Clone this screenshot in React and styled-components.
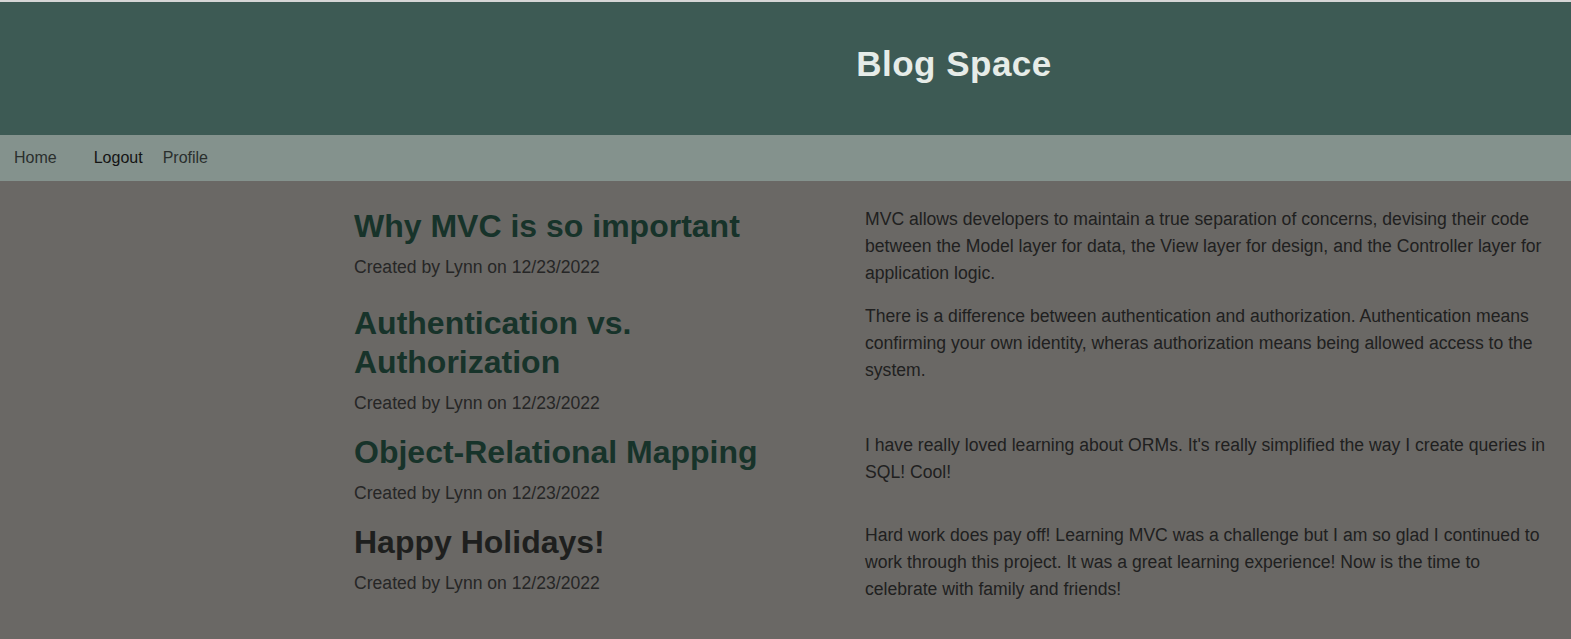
import React from "react";
import styled, { createGlobalStyle } from "styled-components";

const Global = createGlobalStyle`
  html, body {
    margin: 0;
    padding: 0;
    background: #6a6865;
    font-family: "Liberation Sans", Arial, sans-serif;
  }
  body {
    border-top: 2px solid #d6d6d6;
  }
`;

const Page = styled.div`
  min-height: 637px;
  background: #6a6865;
`;

const Header = styled.header`
  height: 133px;
  box-sizing: border-box;
  background: #3d5a54;
  display: flex;
  align-items: center;
  justify-content: center;
  padding-left: 337px;
  padding-bottom: 10px;
`;

const Title = styled.h1`
  margin: 0;
  font-size: 35px;
  font-weight: 700;
  color: #e6ece8;
  letter-spacing: 0.5px;
`;

const Nav = styled.nav`
  height: 46px;
  background: #84928d;
  display: flex;
  align-items: center;
  padding-left: 14px;
`;

const NavLink = styled.a`
  font-size: 16px;
  color: ${(p) => (p.$active ? "#141414" : "#2a2f2d")};
  text-decoration: none;
  margin-right: ${(p) => p.$gap}px;
  cursor: pointer;
`;

const Main = styled.main`
  padding: 26px 20px 20px 354px;
  display: flex;
  flex-direction: column;
  gap: 17px;
`;

const Post = styled.article`
  display: grid;
  grid-template-columns: 480px 1fr;
  column-gap: 31px;
  align-items: start;
`;

const PostHead = styled.div`
  display: flex;
  flex-direction: column;
  gap: 8px;
`;

const PostTitle = styled.h2`
  margin: 0;
  font-size: 32px;
  line-height: 39px;
  font-weight: 700;
  color: ${(p) => (p.$dark ? "#1e1f1e" : "#17332a")};
`;

const Meta = styled.p`
  margin: 0;
  font-size: 17.6px;
  line-height: 26px;
  color: #262626;
`;

const Body = styled.p`
  margin: -1px 0 0;
  font-size: 17.6px;
  line-height: 27px;
  color: #202020;
`;

const posts = [
  {
    title: "Why MVC is so important",
    body:
      "MVC allows developers to maintain a true separation of concerns, devising their code between the Model layer for data, the View layer for design, and the Controller layer for application logic.",
  },
  {
    title: "Authentication vs. Authorization",
    body:
      "There is a difference between authentication and authorization. Authentication means confirming your own identity, wheras authorization means being allowed access to the system.",
  },
  {
    title: "Object-Relational Mapping",
    body:
      "I have really loved learning about ORMs. It's really simplified the way I create queries in SQL! Cool!",
  },
  {
    title: "Happy Holidays!",
    dark: true,
    body:
      "Hard work does pay off! Learning MVC was a challenge but I am so glad I continued to work through this project. It was a great learning experience! Now is the time to celebrate with family and friends!",
  },
];

export default function App() {
  return (
    <Page>
      <Global />
      <Header>
        <Title>Blog Space</Title>
      </Header>
      <Nav>
        <NavLink $gap={37}>Home</NavLink>
        <NavLink $gap={20} $active>
          Logout
        </NavLink>
        <NavLink $gap={0}>Profile</NavLink>
      </Nav>
      <Main>
        {posts.map((p) => (
          <Post key={p.title}>
            <PostHead>
              <PostTitle $dark={p.dark}>{p.title}</PostTitle>
              <Meta>Created by Lynn on 12/23/2022</Meta>
            </PostHead>
            <Body>{p.body}</Body>
          </Post>
        ))}
      </Main>
    </Page>
  );
}
